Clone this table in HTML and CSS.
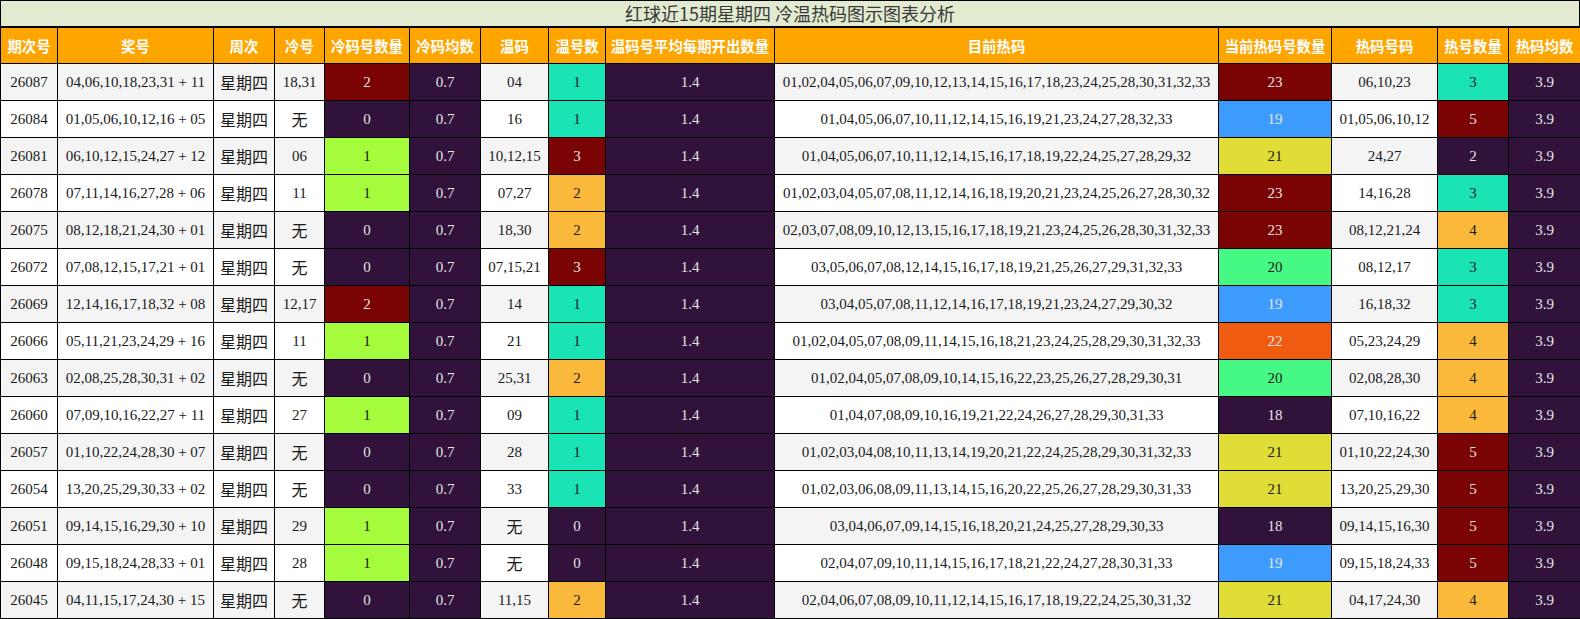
FILE: index.html
```html
<!DOCTYPE html>
<html lang="zh-CN">
<head>
<meta charset="utf-8">
<title>红球近15期星期四 冷温热码图示图表分析</title>
<link rel="stylesheet" href="styles.css">
</head>
<body>
<div class="wrap">
  <div class="title">红球近15期星期四 冷温热码图示图表分析</div>
  <table class="grid">
    <colgroup>
      <col class="w-qc"><col class="w-jh"><col class="w-zc"><col class="w-lh"><col class="w-lsl"><col class="w-ljs"><col class="w-wm"><col class="w-whs"><col class="w-wpj"><col class="w-rm"><col class="w-rsl"><col class="w-rhm"><col class="w-rhs"><col class="w-rjs">
    </colgroup>
    <thead>
      <tr><th>期次号</th><th>奖号</th><th>周次</th><th>冷号</th><th>冷码号数量</th><th>冷码均数</th><th>温码</th><th>温号数</th><th>温码号平均每期开出数量</th><th>目前热码</th><th>当前热码号数量</th><th>热码号码</th><th>热号数量</th><th>热码均数</th></tr>
    </thead>
    <tbody>
      <tr><td>26087</td><td>04,06,10,18,23,31 + 11</td><td class="cjk">星期四</td><td>18,31</td><td class="maroon">2</td><td class="dark">0.7</td><td>04</td><td class="teal">1</td><td class="dark">1.4</td><td>01,02,04,05,06,07,09,10,12,13,14,15,16,17,18,23,24,25,28,30,31,32,33</td><td class="maroon">23</td><td>06,10,23</td><td class="teal">3</td><td class="dark">3.9</td></tr>
      <tr><td>26084</td><td>01,05,06,10,12,16 + 05</td><td class="cjk">星期四</td><td class="cjk">无</td><td class="dark">0</td><td class="dark">0.7</td><td>16</td><td class="teal">1</td><td class="dark">1.4</td><td>01,04,05,06,07,10,11,12,14,15,16,19,21,23,24,27,28,32,33</td><td class="blue">19</td><td>01,05,06,10,12</td><td class="maroon">5</td><td class="dark">3.9</td></tr>
      <tr><td>26081</td><td>06,10,12,15,24,27 + 12</td><td class="cjk">星期四</td><td>06</td><td class="lime">1</td><td class="dark">0.7</td><td>10,12,15</td><td class="maroon">3</td><td class="dark">1.4</td><td>01,04,05,06,07,10,11,12,14,15,16,17,18,19,22,24,25,27,28,29,32</td><td class="yellow">21</td><td>24,27</td><td class="dark">2</td><td class="dark">3.9</td></tr>
      <tr><td>26078</td><td>07,11,14,16,27,28 + 06</td><td class="cjk">星期四</td><td>11</td><td class="lime">1</td><td class="dark">0.7</td><td>07,27</td><td class="orange">2</td><td class="dark">1.4</td><td>01,02,03,04,05,07,08,11,12,14,16,18,19,20,21,23,24,25,26,27,28,30,32</td><td class="maroon">23</td><td>14,16,28</td><td class="teal">3</td><td class="dark">3.9</td></tr>
      <tr><td>26075</td><td>08,12,18,21,24,30 + 01</td><td class="cjk">星期四</td><td class="cjk">无</td><td class="dark">0</td><td class="dark">0.7</td><td>18,30</td><td class="orange">2</td><td class="dark">1.4</td><td>02,03,07,08,09,10,12,13,15,16,17,18,19,21,23,24,25,26,28,30,31,32,33</td><td class="maroon">23</td><td>08,12,21,24</td><td class="orange">4</td><td class="dark">3.9</td></tr>
      <tr><td>26072</td><td>07,08,12,15,17,21 + 01</td><td class="cjk">星期四</td><td class="cjk">无</td><td class="dark">0</td><td class="dark">0.7</td><td>07,15,21</td><td class="maroon">3</td><td class="dark">1.4</td><td>03,05,06,07,08,12,14,15,16,17,18,19,21,25,26,27,29,31,32,33</td><td class="green">20</td><td>08,12,17</td><td class="teal">3</td><td class="dark">3.9</td></tr>
      <tr><td>26069</td><td>12,14,16,17,18,32 + 08</td><td class="cjk">星期四</td><td>12,17</td><td class="maroon">2</td><td class="dark">0.7</td><td>14</td><td class="teal">1</td><td class="dark">1.4</td><td>03,04,05,07,08,11,12,14,16,17,18,19,21,23,24,27,29,30,32</td><td class="blue">19</td><td>16,18,32</td><td class="teal">3</td><td class="dark">3.9</td></tr>
      <tr><td>26066</td><td>05,11,21,23,24,29 + 16</td><td class="cjk">星期四</td><td>11</td><td class="lime">1</td><td class="dark">0.7</td><td>21</td><td class="teal">1</td><td class="dark">1.4</td><td>01,02,04,05,07,08,09,11,14,15,16,18,21,23,24,25,28,29,30,31,32,33</td><td class="red">22</td><td>05,23,24,29</td><td class="orange">4</td><td class="dark">3.9</td></tr>
      <tr><td>26063</td><td>02,08,25,28,30,31 + 02</td><td class="cjk">星期四</td><td class="cjk">无</td><td class="dark">0</td><td class="dark">0.7</td><td>25,31</td><td class="orange">2</td><td class="dark">1.4</td><td>01,02,04,05,07,08,09,10,14,15,16,22,23,25,26,27,28,29,30,31</td><td class="green">20</td><td>02,08,28,30</td><td class="orange">4</td><td class="dark">3.9</td></tr>
      <tr><td>26060</td><td>07,09,10,16,22,27 + 11</td><td class="cjk">星期四</td><td>27</td><td class="lime">1</td><td class="dark">0.7</td><td>09</td><td class="teal">1</td><td class="dark">1.4</td><td>01,04,07,08,09,10,16,19,21,22,24,26,27,28,29,30,31,33</td><td class="dark">18</td><td>07,10,16,22</td><td class="orange">4</td><td class="dark">3.9</td></tr>
      <tr><td>26057</td><td>01,10,22,24,28,30 + 07</td><td class="cjk">星期四</td><td class="cjk">无</td><td class="dark">0</td><td class="dark">0.7</td><td>28</td><td class="teal">1</td><td class="dark">1.4</td><td>01,02,03,04,08,10,11,13,14,19,20,21,22,24,25,28,29,30,31,32,33</td><td class="yellow">21</td><td>01,10,22,24,30</td><td class="maroon">5</td><td class="dark">3.9</td></tr>
      <tr><td>26054</td><td>13,20,25,29,30,33 + 02</td><td class="cjk">星期四</td><td class="cjk">无</td><td class="dark">0</td><td class="dark">0.7</td><td>33</td><td class="teal">1</td><td class="dark">1.4</td><td>01,02,03,06,08,09,11,13,14,15,16,20,22,25,26,27,28,29,30,31,33</td><td class="yellow">21</td><td>13,20,25,29,30</td><td class="maroon">5</td><td class="dark">3.9</td></tr>
      <tr><td>26051</td><td>09,14,15,16,29,30 + 10</td><td class="cjk">星期四</td><td>29</td><td class="lime">1</td><td class="dark">0.7</td><td class="cjk">无</td><td class="dark">0</td><td class="dark">1.4</td><td>03,04,06,07,09,14,15,16,18,20,21,24,25,27,28,29,30,33</td><td class="dark">18</td><td>09,14,15,16,30</td><td class="maroon">5</td><td class="dark">3.9</td></tr>
      <tr><td>26048</td><td>09,15,18,24,28,33 + 01</td><td class="cjk">星期四</td><td>28</td><td class="lime">1</td><td class="dark">0.7</td><td class="cjk">无</td><td class="dark">0</td><td class="dark">1.4</td><td>02,04,07,09,10,11,14,15,16,17,18,21,22,24,27,28,30,31,33</td><td class="blue">19</td><td>09,15,18,24,33</td><td class="maroon">5</td><td class="dark">3.9</td></tr>
      <tr><td>26045</td><td>04,11,15,17,24,30 + 15</td><td class="cjk">星期四</td><td class="cjk">无</td><td class="dark">0</td><td class="dark">0.7</td><td>11,15</td><td class="orange">2</td><td class="dark">1.4</td><td>02,04,06,07,08,09,10,11,12,14,15,16,17,18,19,22,24,25,30,31,32</td><td class="yellow">21</td><td>04,17,24,30</td><td class="orange">4</td><td class="dark">3.9</td></tr>
    </tbody>
  </table>
</div>
</body>
</html>
```
FILE: styles.css
```css
html, body {
  margin: 0;
  padding: 0;
  background: #ffffff;
}

.wrap {
  width: 1580px;
}

.title {
  box-sizing: border-box;
  width: 1580px;
  height: 27px;
  border: 1px solid #000;
  background: #e2ebd0;
  color: #3a3a3a;
  font-family: "Noto Sans CJK SC", "Noto Sans", sans-serif;
  font-size: 18px;
  line-height: 24px;
  text-align: center;
}

.grid {
  width: 1580px;
  table-layout: fixed;
  border-collapse: collapse;
  border: 1px solid #000;
  font-family: "Liberation Serif", "Noto Sans CJK SC", serif;
  font-size: 15px;
  color: #1a1a1a;
}

.w-qc { width: 57px; }
.w-jh { width: 156px; }
.w-zc { width: 61px; }
.w-lh { width: 50px; }
.w-lsl { width: 85px; }
.w-ljs { width: 71px; }
.w-wm { width: 68px; }
.w-whs { width: 57px; }
.w-wpj { width: 169px; }
.w-rm { width: 444px; }
.w-rsl { width: 113px; }
.w-rhm { width: 106px; }
.w-rhs { width: 71px; }
.w-rjs { width: 72px; }

.grid th,
.grid td {
  border: 1px solid #000;
  padding: 0;
  text-align: center;
  vertical-align: middle;
  white-space: nowrap;
  overflow: hidden;
}

.grid th {
  height: 35px;
  background: #ffa500;
  color: #ffffff;
  font-family: "Noto Sans CJK SC", sans-serif;
  font-weight: bold;
  font-size: 14.4px;
}

.grid td {
  height: 36px;
}

.grid tbody tr:nth-child(odd) td { background: #f4f4f4; }
.grid tbody tr:nth-child(even) td { background: #ffffff; }

.grid td.cjk {
  font-family: "Noto Sans CJK SC", sans-serif;
  font-size: 16px;
}

.grid tbody tr td.dark { background: #30123b; color: #e4e4e4; }
.grid tbody tr td.maroon { background: #7a0403; color: #e4e4e4; }
.grid tbody tr td.teal { background: #1ae4b6; color: #1a1a1a; }
.grid tbody tr td.lime { background: #a4fc3c; color: #1a1a1a; }
.grid tbody tr td.orange { background: #fab93a; color: #1a1a1a; }
.grid tbody tr td.blue { background: #3e9bfe; color: #e4e4e4; }
.grid tbody tr td.yellow { background: #e1dd37; color: #1a1a1a; }
.grid tbody tr td.green { background: #46f884; color: #1a1a1a; }
.grid tbody tr td.red { background: #f05b12; color: #e4e4e4; }
```
